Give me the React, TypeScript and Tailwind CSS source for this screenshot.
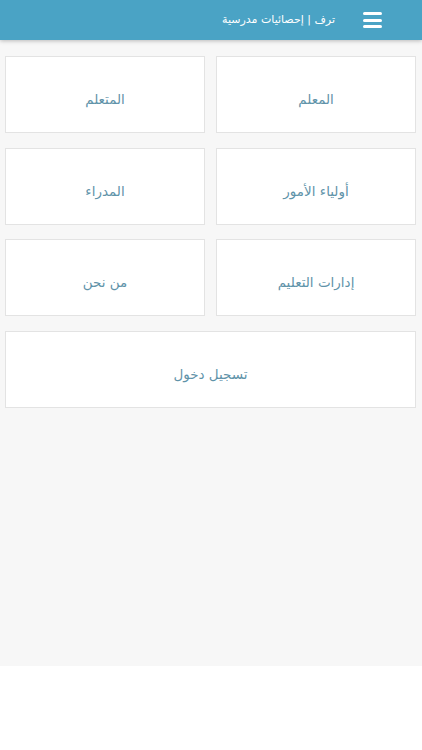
import React from "react";

const items = ["المعلم", "المتعلم", "أولياء الأمور", "المدراء", "إدارات التعليم", "من نحن"];

function Tile({ label, wide }: { label: string; wide?: boolean }) {
  return (
    <a
      href="#"
      className={`flex h-[77px] items-center justify-center border border-[#e3e3e3] bg-white pt-[9px] text-[13.5px] text-[#5f93a9] ${
        wide ? "col-span-2" : ""
      }`}
    >
      {label}
    </a>
  );
}

export default function App() {
  return (
    <div dir="rtl" className="h-[666px] bg-[#f7f7f7]" style={{ fontFamily: '"DejaVu Sans", sans-serif' }}>
      <header className="flex h-[40px] items-center bg-[#4aa3c5] pr-[40px] shadow-[0_1px_4px_rgba(0,0,0,0.25)]">
        <button className="flex h-[20px] w-[19px] flex-col justify-between py-[2px]">
          <span className="block h-[3px] w-full rounded-sm bg-white" />
          <span className="block h-[3px] w-full rounded-sm bg-white" />
          <span className="block h-[3px] w-full rounded-sm bg-white" />
        </button>
        <span className="mr-[28px] pt-[1px] text-[11px] text-white">ترف | إحصائيات مدرسية</span>
      </header>
      <main className="grid grid-cols-2 gap-x-[11px] gap-y-[14.67px] pl-[5px] pr-[6px] pt-[16px]">
        {items.map((item) => (
          <Tile key={item} label={item} />
        ))}
        <Tile label="تسجيل دخول" wide />
      </main>
    </div>
  );
}
